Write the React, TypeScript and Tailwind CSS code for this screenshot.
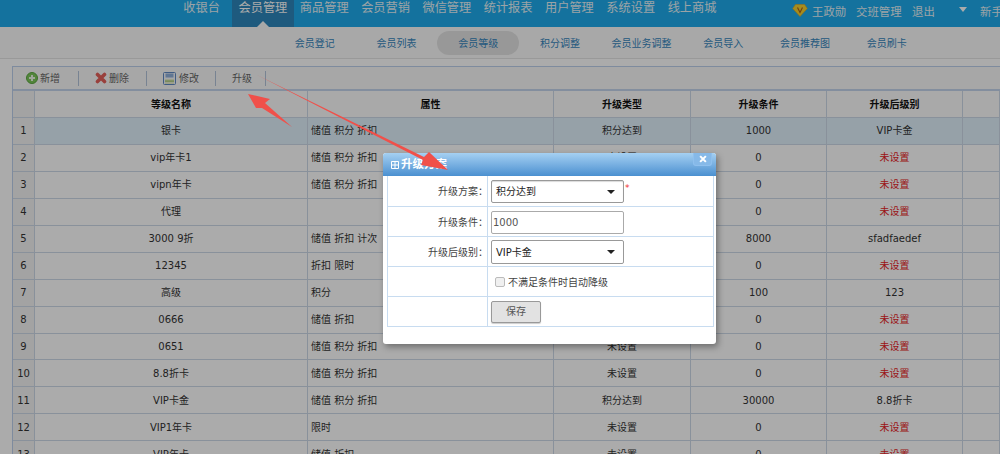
import React from "react";

const nav = ["收银台", "会员管理", "商品管理", "会员营销", "微信管理", "统计报表", "用户管理", "系统设置", "线上商城"];
const sub = ["会员登记", "会员列表", "会员等级", "积分调整", "会员业务调整", "会员导入", "会员推荐图", "会员刷卡"];
const U = "未设置";
const rows: [string, string, string, string, string][] = [
  ["银卡", "储值 积分 折扣", "积分达到", "1000", "VIP卡金"],
  ["vip年卡1", "储值 积分 折扣", U, "0", U],
  ["vipn年卡", "储值 积分 折扣", U, "0", U],
  ["代理", "", U, "0", U],
  ["3000 9折", "储值 折扣 计次", "积分达到", "8000", "sfadfaedef"],
  ["12345", "折扣 限时", U, "0", U],
  ["高级", "积分", "积分达到", "100", "123"],
  ["0666", "储值 折扣", U, "0", U],
  ["0651", "储值 积分 折扣", U, "0", U],
  ["8.8折卡", "储值 积分 折扣", U, "0", U],
  ["VIP卡金", "储值 积分 折扣", "积分达到", "30000", "8.8折卡"],
  ["VIP1年卡", "限时", U, "0", U],
  ["VIP年卡", "储值 折扣", U, "0", U],
];
const cols = "grid grid-cols-[22px_273px_246px_137px_136px_136px_1fr]";
const cell = "border-r border-b border-[#ccd8e8] flex items-center justify-center h-full";

function Sep() {
  return <span className="w-px h-[15px] bg-[#b4c4da] shrink-0" />;
}

function Caret() {
  return <span className="w-0 h-0 border-x-[4px] border-x-transparent border-t-[4px] border-t-[#222]" />;
}

function Row({ label, children, h }: { label?: string; children?: React.ReactNode; h: string }) {
  return (
    <div className={`flex border-b border-[#c8dcf0] pt-px ${h}`}>
      <div className="w-[100px] shrink-0 -mt-px border-r border-[#c8dcf0] flex items-center justify-end pt-px text-[#444]">
        <span className="-mr-px">{label}</span>
      </div>
      <div className="flex-1 flex items-center pl-[3px]">{children}</div>
    </div>
  );
}

export default function App() {
  return (
    <div className="relative w-[1000px] h-[454px] overflow-hidden bg-white text-[10px] text-[#333] font-['DejaVu_Sans','Noto_Sans_CJK_SC',sans-serif]">
      {/* top nav */}
      <div className="h-[27px] bg-[#1eabec] flex pl-[171px] relative text-[#e8f3f8] text-[12.2px] font-['Noto_Sans_CJK_SC',sans-serif] overflow-hidden">
        {nav.map((n, i) => (
          <div
            key={n}
            className={`w-[61.3px] shrink-0 text-center leading-[14px] relative ${i === 1 ? "bg-[#2e87bc] text-white" : ""}`}
          >
            {n}
            {i === 1 && (
              <span className="absolute left-1/2 -translate-x-1/2 bottom-0 w-0 h-0 border-x-[6px] border-x-transparent border-b-[6px] border-b-[#fbfbfb]" />
            )}
          </div>
        ))}
        <div className="flex-1" />
        <div className="flex items-center absolute left-[792px] top-[4px] h-[15px] text-[11.4px] whitespace-nowrap">
          <svg width="16" height="13" viewBox="0 0 15 13" className="mr-[4px] -mt-[2px]">
            <path d="M3 0.5h9l2.8 4L7.5 12.5 0.2 4.5z" fill="#f7d12d" stroke="#e0a818" strokeWidth="0.6" />
            <path d="M5 3.5l2.5 5 2.5-5" fill="none" stroke="#a8641a" strokeWidth="1.2" />
          </svg>
          <span className="w-[44px]">王政勋</span>
          <span className="w-[56px]">交班管理</span>
          <span className="w-[47px]">退出</span>
          <span className="w-0 h-0 border-x-[4px] border-x-transparent border-t-[5px] border-t-white -mt-[5px]" />
          <span className="ml-[13px]">新手入门</span>
        </div>
      </div>

      {/* sub nav */}
      <div className="h-[32px] bg-[#fbfbfb] border-b border-[#e4e4e4] flex items-center pl-[274px] text-[#3686bd] font-['Noto_Sans_CJK_SC',sans-serif]">
        {sub.map((s, i) => (
          <div
            key={s}
            className={`w-[81.7px] shrink-0 h-[24px] flex items-center justify-center ${i === 2 ? "bg-[#e3e3e3] rounded-[12px]" : ""}`}
          >
            {s}
          </div>
        ))}
      </div>

      {/* panel */}
      <div className="ml-[12px] mt-[7px] border-l border-t border-[#bcd0ec]">
        <div className="h-[24px] flex items-center bg-[#fafafa] border-b-2 border-[#c4d4ec] text-[#666]">
          <div className="w-[65px] flex items-center pl-[13px] gap-[2px] shrink-0">
            <svg width="12" height="12" viewBox="0 0 12 12">
              <circle cx="6" cy="6" r="5.5" fill="#7cc65a" stroke="#5aa83f" />
              <path d="M6 3v6M3 6h6" stroke="#eef8e6" strokeWidth="2" />
            </svg>
            新增
          </div>
          <Sep />
          <div className="w-[67px] flex items-center pl-[16px] gap-[2px] shrink-0">
            <svg width="12" height="12" viewBox="0 0 12 12">
              <path d="M2.5 2.5l7 7M9.5 2.5l-7 7" stroke="#e4605a" strokeWidth="3.6" strokeLinecap="round" />
            </svg>
            删除
          </div>
          <Sep />
          <div className="w-[68px] flex items-center pl-[16px] gap-[3px] shrink-0">
            <svg width="13" height="13" viewBox="0 0 13 13">
              <rect x="0.5" y="0.5" width="12" height="12" rx="1" fill="#f4f7fb" stroke="#5f88c4" />
              <rect x="2.5" y="1.5" width="8" height="4" fill="#8fb0dc" />
              <rect x="2" y="7" width="9" height="5" fill="#e7edd0" />
              <rect x="2" y="8.4" width="9" height="1.4" fill="#a8c878" />
            </svg>
            修改
          </div>
          <Sep />
          <div className="w-[49px] flex items-center pl-[16px] shrink-0">升级</div>
          <Sep />
        </div>

        {/* table */}
        <div className={`${cols} h-[27px] bg-[#fcfcfc] text-[#111] font-bold`}>
          <div className={`${cell} bg-[#f4f4f4]`} />
          {["等级名称", "属性", "升级类型", "升级条件", "升级后级别", ""].map((h, i) => (
            <div key={i} className={cell}>{h}</div>
          ))}
        </div>
        {rows.map((r, i) => (
          <div key={i} className={`${cols} h-[26.94px] ${i === 0 ? "bg-[#e0f0fb]" : "bg-white"}`}>
            <div className={`${cell} bg-[#f4f4f4]`}>{i + 1}</div>
            <div className={cell}>{r[0]}</div>
            <div className={`${cell} justify-start pl-[3px]`}>{r[1]}</div>
            <div className={cell}>{r[2]}</div>
            <div className={cell}>{r[3]}</div>
            <div className={`${cell} ${r[4] === U ? "text-[#e81c24]" : ""}`}>{r[4]}</div>
            <div className={cell} />
          </div>
        ))}
      </div>

      {/* modal mask */}
      <div className="absolute inset-0 bg-black/33" />

      {/* dialog */}
      <div className="absolute left-[383px] top-[153px] w-[333px] h-[191px] bg-white rounded-[3px] shadow-[2px_3px_6px_rgba(0,0,0,0.35)]">
        <div className="h-[23px] bg-gradient-to-b from-[#a5d0f2] to-[#4a90d0] rounded-t-[3px] flex items-center pl-[8px] text-white text-[11.5px] font-bold">
          <svg width="8" height="8" viewBox="0 0 8 8" className="mr-[2px]">
            <path d="M0.5 0.5h7v7h-7zM4 0.5v7M0.5 4h7" fill="none" stroke="#fff" />
          </svg>
          升级方案
          <span className="absolute right-[4px] top-0 w-[19px] h-[13px] rounded-b-[3px] border border-t-0 border-[#8fc0ee] bg-[#86b9e8] flex items-center justify-center">
            <svg width="8" height="8" viewBox="0 0 7 7">
              <path d="M1 1l5 5M6 1l-5 5" stroke="#fff" strokeWidth="1.8" />
            </svg>
          </span>
        </div>
        <div className="mx-[4px] w-[327px] border-x border-[#c8dcf0] text-[#444]">
          <Row label="升级方案：" h="h-[31px]">
            <div className="w-[133px] h-[23px] border border-[#999] rounded-[2px] flex items-center justify-between pl-[4px] pr-[8px] text-[#222] bg-white shadow-[inset_0_1px_1px_rgba(0,0,0,0.15)]">
              积分达到
              <Caret />
            </div>
            <span className="text-[#f03030] text-[9px] -mt-[6px] ml-px">*</span>
          </Row>
          <Row label="升级条件：" h="h-[30px]">
            <div className="w-[133px] h-[23px] border border-[#aaa] rounded-[2px] flex items-center pl-px text-[#555]">1000</div>
          </Row>
          <Row label="升级后级别：" h="h-[30px]">
            <div className="w-[133px] h-[24px] border border-[#999] rounded-[2px] flex items-center justify-between pl-[4px] pr-[8px] text-[#222] bg-white">
              VIP卡金
              <Caret />
            </div>
          </Row>
          <Row h="h-[30px]">
            <span className="w-[10px] h-[10px] ml-[4px] mr-[3px] border border-[#bbb] rounded-[2px] bg-[#f0f0f0] shrink-0" />
            不满足条件时自动降级
          </Row>
          <Row h="h-[30px]">
            <div className="w-[50px] h-[22px] -mt-px border border-[#999] rounded-[2px] bg-[#e2e2e2] flex items-center justify-center text-[#555] shadow-[0_1px_1px_rgba(0,0,0,0.2)]">保存</div>
          </Row>
        </div>
      </div>

      {/* annotation arrows */}
      <svg className="absolute inset-0 pointer-events-none" width="1000" height="454" viewBox="0 0 1000 454">
        <path d="M248 94L270 99L265 103L292 127L262 108L256 108Z" fill="#f0504a" />
        <path d="M257 75L424 157L429 152L448 170L421 165L423 160Z" fill="#f0504a" />
      </svg>
    </div>
  );
}
